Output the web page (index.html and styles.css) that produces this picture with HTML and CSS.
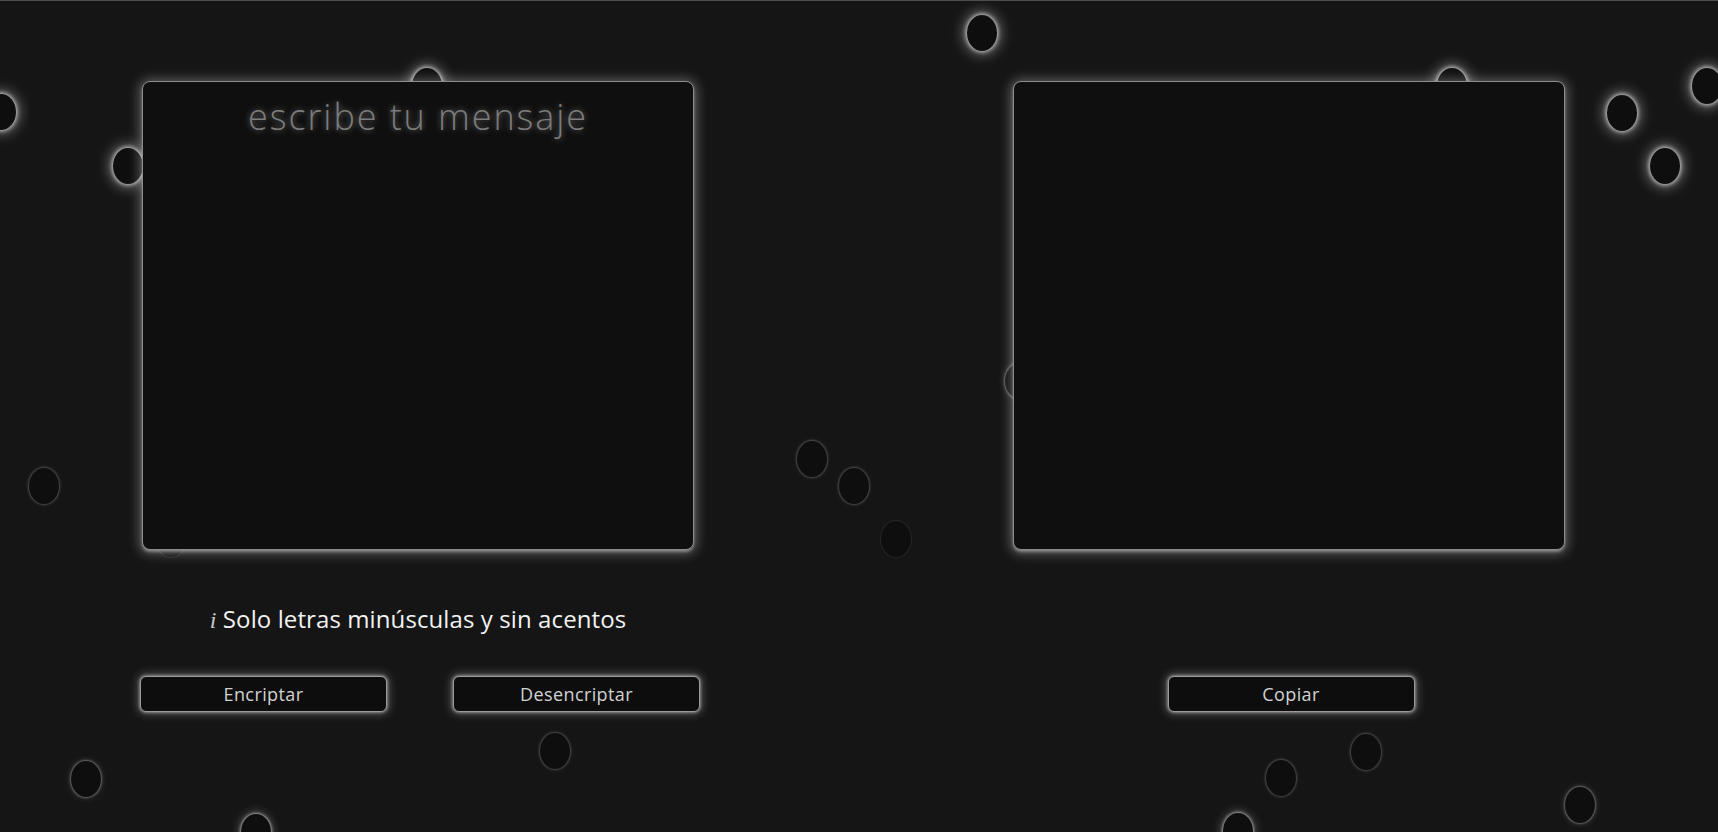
FILE: index.html
```html
<!DOCTYPE html>
<html lang="es">
<head>
<meta charset="utf-8">
<title>Encriptador</title>
<link rel="stylesheet" href="styles.css">
</head>
<body>
<div class="page">
  <div class="bubbles" aria-hidden="true">
    <span class="bubble strong" style="left:967px;top:14px"></span>
    <span class="bubble strong" style="left:412px;top:67px"></span>
    <span class="bubble strong" style="left:-14px;top:93px"></span>
    <span class="bubble strong" style="left:113px;top:147px"></span>
    <span class="bubble strong" style="left:1437px;top:67px"></span>
    <span class="bubble strong" style="left:1607px;top:94px"></span>
    <span class="bubble strong" style="left:1650px;top:147px"></span>
    <span class="bubble strong" style="left:1692px;top:67px"></span>
    <span class="bubble weak" style="left:29px;top:467px"></span>
    <span class="bubble mid" style="left:71px;top:760px"></span>
    <span class="bubble medium" style="left:241px;top:813px"></span>
    <span class="bubble faint" style="left:156px;top:520px"></span>
    <span class="bubble weak" style="left:797px;top:440px"></span>
    <span class="bubble weak" style="left:839px;top:467px"></span>
    <span class="bubble faint" style="left:881px;top:520px"></span>
    <span class="bubble mid" style="left:1005px;top:362px"></span>
    <span class="bubble weak" style="left:540px;top:732px"></span>
    <span class="bubble weak" style="left:1351px;top:733px"></span>
    <span class="bubble weak" style="left:1266px;top:759px"></span>
    <span class="bubble medium" style="left:1223px;top:812px"></span>
    <span class="bubble mid" style="left:1565px;top:786px"></span>
  </div>

  <main class="main">
    <section class="col">
      <div class="box">
        <textarea class="input" placeholder="escribe tu mensaje"></textarea>
      </div>
      <p class="hint"><span class="info">i</span> Solo letras minúsculas y sin acentos</p>
      <div class="actions">
        <button class="btn">Encriptar</button>
        <button class="btn">Desencriptar</button>
      </div>
    </section>
    <section class="col">
      <div class="box"></div>
      <p class="hint hint-empty">&nbsp;</p>
      <div class="actions">
        <button class="btn">Copiar</button>
      </div>
    </section>
  </main>
</div>
</body>
</html>
```
FILE: styles.css
```css
* { box-sizing: border-box; }

html, body {
  margin: 0;
  padding: 0;
  background: #151515;
}

body {
  font-family: "Open Sans", "Noto Sans", sans-serif;
  color: #eeeeee;
}

.page {
  position: relative;
  width: 1718px;
  height: 832px;
  overflow: hidden;
  border-top: 1px solid #4e4e4e;
}

.bubbles {
  position: absolute;
  inset: 0;
  z-index: 0;
}

.bubble {
  position: absolute;
  width: 30px;
  height: 36px;
  border-radius: 50%;
  background: #0e0e0e;
}

.bubble.strong {
  box-shadow: 0 0 4px 1px rgba(255,255,255,0.7), 0 0 12px 4px rgba(255,255,255,0.3), 0 0 22px 6px rgba(255,255,255,0.08);
}

.bubble.medium {
  box-shadow: 0 0 3px 1px rgba(255,255,255,0.55), 0 0 10px 3px rgba(255,255,255,0.2);
}

.bubble.mid {
  box-shadow: 0 0 2px 1px rgba(255,255,255,0.32), 0 0 6px 2px rgba(255,255,255,0.1);
}

.bubble.weak {
  box-shadow: 0 0 2px 1px rgba(255,255,255,0.2), 0 0 5px 1px rgba(255,255,255,0.07);
}

.bubble.faint {
  box-shadow: 0 0 1px 1px rgba(255,255,255,0.08);
}

.main {
  position: relative;
  z-index: 1;
  display: flex;
  gap: 319px;
  padding: 80px 0 0 142px;
}

.col {
  width: 552px;
  display: flex;
  flex-direction: column;
  align-items: center;
}

.box {
  width: 552px;
  height: 469px;
  border: 1px solid #8c8c8c;
  border-radius: 8px;
  background: #0f0f0f;
  box-shadow: 0 2px 3px rgba(255,255,255,0.35), 0 1px 12px 3px rgba(255,255,255,0.3);
  overflow: hidden;
}

.input {
  display: block;
  width: 100%;
  height: 100%;
  border: none;
  outline: none;
  resize: none;
  background: transparent;
  padding: 10px 10px;
  font-family: "Open Sans", "Noto Sans", sans-serif;
  font-weight: 300;
  font-size: 36px;
  line-height: 50px;
  letter-spacing: 1.9px;
  text-align: center;
  color: #dddddd;
}

.input::placeholder {
  color: #7c7c7c;
  text-shadow: 0 0 6px rgba(255,255,255,0.4);
  opacity: 1;
}

.hint {
  margin: 53px 0 0;
  height: 32px;
  line-height: 32px;
  font-size: 24px;
  letter-spacing: 0.1px;
  color: #f2f2f2;
  white-space: nowrap;
}

.hint-empty {
  visibility: hidden;
}

.info {
  font-family: "Liberation Serif", "DejaVu Serif", serif;
  font-style: italic;
  font-size: 24px;
  color: #c8c8c8;
}

.actions {
  margin-top: 41px;
  padding-left: 4px;
  display: flex;
  gap: 66px;
}

.btn {
  width: 247px;
  height: 36px;
  border: 1px solid #9a9a9a;
  border-radius: 6px;
  background: #0d0d0d;
  color: #d2d2d2;
  font-family: "Open Sans", "Noto Sans", sans-serif;
  font-size: 18px;
  letter-spacing: 0.4px;
  line-height: 34px;
  padding: 0;
  box-shadow: 0 0 3px 1px rgba(255,255,255,0.4), 0 0 9px 3px rgba(255,255,255,0.22);
  cursor: pointer;
}
```
